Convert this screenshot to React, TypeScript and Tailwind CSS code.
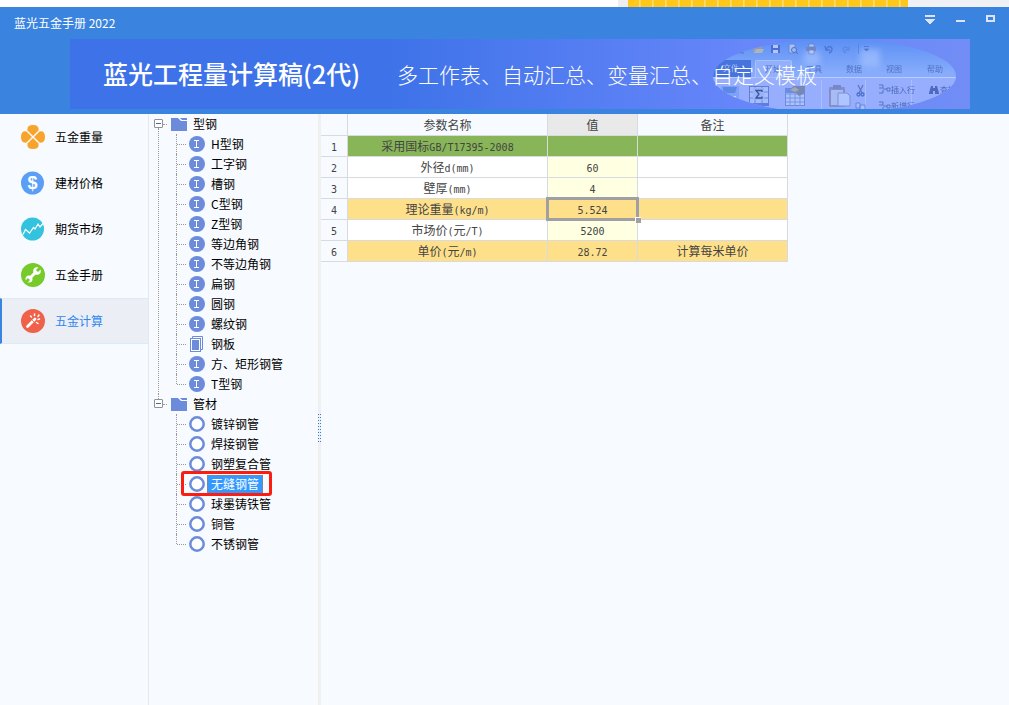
import { Fragment, useState } from "react";
import type { ReactNode } from "react";
import clsx from "clsx";

const NAV_ITEMS = [
  { label: "五金重量", icon: <CloverIcon /> },
  { label: "建材价格", icon: <DollarIcon /> },
  { label: "期货市场", icon: <TrendIcon /> },
  { label: "五金手册", icon: <WrenchIcon /> },
  { label: "五金计算", icon: <WandIcon /> },
];

type IconKind = "beam" | "plate" | "pipe";

interface TreeGroupData {
  label: string;
  items: { label: string; icon: IconKind }[];
}

const beam = (label: string) => ({ label, icon: "beam" as IconKind });
const pipe = (label: string) => ({ label, icon: "pipe" as IconKind });

const TREE: TreeGroupData[] = [
  {
    label: "型钢",
    items: [
      beam("H型钢"),
      beam("工字钢"),
      beam("槽钢"),
      beam("C型钢"),
      beam("Z型钢"),
      beam("等边角钢"),
      beam("不等边角钢"),
      beam("扁钢"),
      beam("圆钢"),
      beam("螺纹钢"),
      { label: "钢板", icon: "plate" },
      beam("方、矩形钢管"),
      beam("T型钢"),
    ],
  },
  {
    label: "管材",
    items: [
      pipe("镀锌钢管"),
      pipe("焊接钢管"),
      pipe("钢塑复合管"),
      pipe("无缝钢管"),
      pipe("球墨铸铁管"),
      pipe("铜管"),
      pipe("不锈钢管"),
    ],
  },
];

interface Row {
  name: string;
  value: string;
  note: string;
  kind: "title" | "input" | "result";
}

const ROWS: Row[] = [
  { name: "采用国标GB/T17395-2008", value: "", note: "", kind: "title" },
  { name: "外径d(mm)", value: "60", note: "", kind: "input" },
  { name: "壁厚(mm)", value: "4", note: "", kind: "input" },
  { name: "理论重量(kg/m)", value: "5.524", note: "", kind: "result" },
  { name: "市场价(元/T)", value: "5200", note: "", kind: "input" },
  { name: "单价(元/m)", value: "28.72", note: "计算每米单价", kind: "result" },
];

export default function App() {
  const [page, setPage] = useState("五金计算");
  const [node, setNode] = useState("无缝钢管");

  return (
    <div className="flex min-h-screen flex-col bg-[#f7fbff] font-['Noto_Sans_CJK_SC',sans-serif] text-xs text-black">
      <TopStrip />
      <header className="bg-[#3a84e0] pb-[5px]">
        <TitleBar />
        <Banner />
      </header>
      <div className="flex flex-1">
        <nav className="flex w-[149px] shrink-0 flex-col border-r border-[#e4e9f1]">
          {NAV_ITEMS.map((item) => (
            <button
              key={item.label}
              type="button"
              onClick={() => setPage(item.label)}
              className={clsx(
                "flex h-[46px] items-center gap-[10px] border-y border-l-2 pl-[19px]",
                item.label === page
                  ? "border-y-[#dce9f8] border-l-[#3a84e0] bg-[#ebeef5] text-[#2f86ee]"
                  : "border-transparent",
              )}
            >
              {item.icon}
              {item.label}
            </button>
          ))}
        </nav>
        <aside className="w-[169px] shrink-0 pl-[5px]">
          {TREE.map((group, i) => (
            <TreeGroup
              key={group.label}
              group={group}
              first={i === 0}
              last={i === TREE.length - 1}
              selected={node}
              onSelect={setNode}
            />
          ))}
        </aside>
        <div className="flex w-[3px] shrink-0 flex-col bg-[#f0f0f0] pt-[300px]">
          <div className="flex h-7 justify-between">
            <GripDots />
            <GripDots />
          </div>
        </div>
        <main className="min-w-0 flex-1">
          <ParamTable />
        </main>
      </div>
    </div>
  );
}

function GripDots() {
  return (
    <span className="w-px bg-[repeating-linear-gradient(180deg,#2f80d8_0px,#2f80d8_1px,transparent_1px,transparent_3px)]" />
  );
}

function TopStrip() {
  return (
    <div className="flex h-[7px] bg-white">
      <div className="flex-1" />
      <div className="w-[10px] bg-[#eeeef0]" />
      <div className="w-[280px] bg-[repeating-linear-gradient(90deg,#ffc61a_0px,#ffc81e_11px,#ffe07a_11px,#ffd34a_13px)]" />
      <div className="w-[101px] bg-[#f0f1f4]" />
    </div>
  );
}

function TitleBar() {
  return (
    <div className="flex h-8 items-center pr-1 pl-[14px] text-white">
      <h1 className="flex-1">蓝光五金手册 2022</h1>
      <div className="flex self-start">
        <WindowButton label="菜单">
          <path d="M1 1h10v2H1zM1 5h10v1L6 10L1 6z" />
        </WindowButton>
        <WindowButton label="最小化">
          <path d="M2 6h9v2H2z" />
        </WindowButton>
        <WindowButton label="最大化">
          <path fillRule="evenodd" d="M2 1h9v7H2zM4 3v3h5V3z" />
        </WindowButton>
      </div>
    </div>
  );
}

function WindowButton({ label, children }: { label: string; children: ReactNode }) {
  return (
    <button type="button" aria-label={label} className="flex h-[26px] w-[30px] items-center justify-center">
      <svg width="12" height="12" viewBox="0 0 12 12" fill="#dde3f8" shapeRendering="crispEdges">
        {children}
      </svg>
    </button>
  );
}

function Banner() {
  return (
    <div className="relative mr-[39px] ml-[70px] flex h-[70px] items-center overflow-hidden bg-linear-to-r from-[#3d72e8] from-35% to-[#6686fa] to-75% pl-[33px] whitespace-nowrap text-white">
      <div className="absolute inset-y-0 right-0">
        <RibbonArt />
      </div>
      <span className="relative text-[25px] font-medium">蓝光工程量计算稿(2代)</span>
      <span className="relative ml-[37px] text-[21px] font-light">多工作表、自动汇总、变量汇总、自定义模板</span>
    </div>
  );
}

// Faded office ribbon inside an ellipse, at the right end of the banner
function RibbonArt() {
  return (
    <svg width="290" height="70" viewBox="0 0 290 70" aria-hidden="true">
      <defs>
        <clipPath id="lens">
          <ellipse cx="154.500" cy="37" rx="121.500" ry="37" />
        </clipPath>
        <linearGradient id="sky" x1="0" y1="0" x2="0" y2="1">
          <stop offset="0" stopColor="#5b8ff5" />
          <stop offset="0.45" stopColor="#86acfb" />
          <stop offset="1" stopColor="#92acfc" />
        </linearGradient>
        <linearGradient id="edge" x1="0" y1="0" x2="1" y2="0">
          <stop offset="0" stopColor="#6686fa" stopOpacity="0" />
          <stop offset="1" stopColor="#728df5" />
        </linearGradient>
        <filter id="glow" x="-30%" y="-30%" width="160%" height="160%">
          <feGaussianBlur stdDeviation="3" />
        </filter>
      </defs>
      <rect width="290" height="70" fill="url(#edge)" />
      <g clipPath="url(#lens)">
        <rect width="290" height="74" fill="url(#sky)" />
        <path d="M124 12h16v14h-16zM180 10h20v18h-20z" fill="#b4cdff" opacity="0.5" filter="url(#glow)" />
        <rect x="33" y="38" width="244" height="36" fill="#96aefd" />
        <path d="M33 38.500H277" stroke="#b9ceff" />
        <rect x="33" y="21" width="38" height="17" fill="#4674dc" />
        <rect x="75.500" y="21.500" width="36" height="17" rx="1" fill="#93b0fd" stroke="#aabff6" />
        <path d="M141.500 41v30M185.500 41v30M231.500 41v30" stroke="#aabffe" />

        <g opacity="0.8">
          {/* quick access bar */}
          <path d="M55 14q2-1 9 0" stroke="#4565b8" fill="none" />
          <path d="M73 9h4l1-2h4v2l-2 5h-7z" fill="#9a9cb2" />
          <path d="M74 14l2-4h8l-2 4z" fill="#c0bca8" />
          <path d="M91 6h9v8h-9z" fill="#4b60cb" />
          <path d="M93 6h5v3h-5zM93 11h5v3h-5z" fill="#c3d2ff" />
          <path d="M109 5h6v9h-6z" fill="#b5cafb" stroke="#6385cb" />
          <circle cx="114" cy="11" r="2.500" fill="#9cc3ff" stroke="#5166a4" />
          <path d="M116 13l2 2" stroke="#5166a4" />
          <path d="M126 8h10v4h-10z" fill="#7580b8" />
          <path d="M129 5h5v3h-5zM129 11h5v4h-5z" fill="#bed0fb" stroke="#6079b8" strokeWidth="0.700" />
          <path d="M145 7l1 4h4M146 10q5-5 6 0q0 3-3 4" fill="none" stroke="#476fcc" strokeWidth="1.400" />
          <path d="M169 7v4h-4M169 10q-5-4-6 0q0 3 3 4" fill="none" stroke="#5e87dc" strokeWidth="1.400" />
          <path d="M178.500 5v10" stroke="#5782d8" />
          <path d="M184 7.500h5M184.500 10h4l-2 2z" stroke="#4769b7" strokeWidth="0.800" fill="#4769b7" />

          <g fontFamily="'Noto Sans CJK SC', sans-serif" fontSize="8" fill="#4765b8">
            <text x="43" y="32" fill="#c2d3fc">文件</text>
            <text x="85" y="33">开始</text>
            <text x="126" y="33">工具</text>
            <text x="166" y="33">数据</text>
            <text x="206" y="33">视图</text>
            <text x="247" y="33">帮助</text>
            <text x="211" y="54" fill="#3a56a8">插入行</text>
            <text x="211" y="70" fill="#3a56a8">新增行</text>
            <text x="260" y="54" fill="#3a56a8">查找</text>
          </g>

          {/* calculator */}
          <path d="M41 47h18v24H41z" fill="#78a0f4" />
          <path d="M43 48h14l-2 6H43z" fill="#4e80df" />
          <path d="M43 58h3M48 58h3M53 58h3M43 62h3M48 62h3M53 62h3" stroke="#d0ddff" strokeWidth="2" />
          {/* sum grid */}
          <rect x="69.500" y="47.500" width="19" height="18" fill="#a8c1ff" stroke="#5471cc" />
          <path d="M70 53h18M70 59h18M75 48v17M82 48v17" stroke="#627ed5" />
          <rect x="73" y="49" width="11" height="12" fill="#9ab5fa" />
          <path d="M82 53v-1.500h-6l3 3.500l-3 4h6v-1.500" fill="none" stroke="#263b79" strokeWidth="1.300" />
          <path d="M69 64h20v3H69z" fill="#4e73d5" />
          {/* property grid */}
          <rect x="105.500" y="49.500" width="19" height="17" fill="#b3c8ff" stroke="#6382d5" />
          <path d="M106 55h18M106 59h18M106 63h18M110 50v17M115 50v17M120 50v17" stroke="#718edc" />
          <path d="M105 50h20v4h-20z" fill="#6183df" />
          <path d="M109 51l5-4h11v7l-6 3l-3-3z" fill="#6f7fa6" />
          <path d="M110 51l5-3l4 3l-4 2z" fill="#a5a7a8" />
          {/* paste */}
          <rect x="149" y="48" width="16" height="20" rx="1" fill="#8087bb" />
          <rect x="151" y="51" width="12" height="15" fill="#aebff0" />
          <path d="M153 46h8v4h-8z" fill="#6f7ec0" />
          <path d="M158 54h9l3 3v10h-12z" fill="#b6cbff" stroke="#708ad0" />
          {/* scissors */}
          <path d="M178 46l4 8M183 46l-4 8" stroke="#5269b7" strokeWidth="1.300" />
          <circle cx="178.500" cy="55.500" r="1.500" fill="none" stroke="#3a5fc1" strokeWidth="1.300" />
          <circle cx="182.500" cy="55.500" r="1.500" fill="none" stroke="#3a5fc1" strokeWidth="1.300" />
          <path d="M176 64h4v5h-4zM180 66h5v5h-5z" fill="#adc4ff" stroke="#5b7ed4" />
          {/* insert row / new row */}
          <g fill="none" stroke="#4a64b5">
            <path d="M199 46h4v3h-4M199 54h4v-3M203 50h4M207 49h3v3h-3z" />
            <path d="M199 63h4v3h-4M199 71h4v-3M203 67h4M207 66h3v3h-3z" />
          </g>
          {/* binoculars */}
          <path d="M249 54l2-7h2v8h-4zM255 47h2l2 7v1h-4zM253 49h2v3h-2z" fill="#3d59b0" />
        </g>
      </g>
    </svg>
  );
}

interface TreeGroupProps {
  group: TreeGroupData;
  first: boolean;
  last: boolean;
  selected: string;
  onSelect: (label: string) => void;
}

function TreeGroup({ group, first, last, selected, onSelect }: TreeGroupProps) {
  const [open, setOpen] = useState(true);
  const guide = "border-l border-dotted border-[#999]";

  return (
    <div className="flex">
      <div className="flex w-[9px] flex-col items-center">
        <span className={clsx("h-[5px]", !first && guide)} />
        <button
          type="button"
          aria-label={open ? "折叠" : "展开"}
          onClick={() => setOpen(!open)}
          className="flex size-[9px] items-center justify-center rounded-[1px] border border-[#919191] bg-white"
        >
          <span className="h-px w-[5px] bg-[#4b63a7]" />
        </button>
        <span className={clsx("flex-1", !last && guide)} />
      </div>
      <div>
        <div className="flex h-5 items-center">
          <span className="mr-1 w-1 border-t border-dotted border-[#999]" />
          <svg width="16" height="13" viewBox="0 0 16 13" fill="#6c8cdb" aria-hidden="true">
            <path d="M0 0h7l3 3h6v10H0z" />
            <path d="M9 0h7v2h-5z" />
          </svg>
          <span className="ml-[6px]">{group.label}</span>
        </div>
        {open && (
          <ul className="pl-[13px]">
            {group.items.map((item, i) => (
              <li key={item.label} className="relative flex h-5 items-center">
                <span
                  className={clsx(
                    guide,
                    "self-start",
                    i === group.items.length - 1 ? "h-[10px]" : "h-5",
                  )}
                />
                <span className="mr-[3px] w-[9px] border-t border-dotted border-[#999]" />
                <TreeIcon kind={item.icon} />
                <button
                  type="button"
                  onClick={() => onSelect(item.label)}
                  className={clsx(
                    "ml-[2px] h-[19px] border border-dotted px-[3px] leading-4 whitespace-nowrap",
                    item.label === selected
                      ? "border-[#c2763a] bg-[#3399ff] text-white"
                      : "border-transparent",
                  )}
                >
                  {item.label}
                </button>
                {item.label === selected && (
                  <span className="pointer-events-none absolute -top-[3px] left-[5px] h-[25px] w-[91px] rounded-[3px] border-3 border-[#fb1d10]" />
                )}
              </li>
            ))}
          </ul>
        )}
      </div>
    </div>
  );
}

function TreeIcon({ kind }: { kind: IconKind }) {
  return (
    <svg width="16" height="16" viewBox="0 0 16 16" className="shrink-0" aria-hidden="true">
      {kind === "beam" && (
        <>
          <circle cx="8" cy="8" r="8" fill="#6c8cdb" />
          <path d="M5 4.500h5M5 11.500h5M7.500 4.500v7" stroke="#fff" />
        </>
      )}
      {kind === "pipe" && (
        <circle cx="8" cy="8" r="6.700" fill="#fff" stroke="#6c8cdb" strokeWidth="2.500" />
      )}
      {kind === "plate" && (
        <>
          <path d="M3.500 2.500v-2h10v13h-2" fill="none" stroke="#6c8cdb" />
          <rect x="1.500" y="2.500" width="10" height="13" fill="#fff" stroke="#6c8cdb" />
          <rect x="3" y="4" width="7" height="10" fill="#6c8cdb" />
        </>
      )}
    </svg>
  );
}

const cell = "h-[21px] border-r border-b border-[#d7dade] p-0 text-center font-normal leading-4";

function ParamTable() {
  return (
    <table className="table-fixed border-separate border-spacing-0 text-[#444]">
      <colgroup>
        <col className="w-[27px]" />
        <col className="w-[200px]" />
        <col className="w-[90px]" />
        <col className="w-[150px]" />
      </colgroup>
      <thead>
        <tr className="h-[22px]">
          <th className={cell} />
          <th className={cell}>参数名称</th>
          <th className={clsx(cell, "bg-[#e9e9e9]")}>值</th>
          <th className={cell}>备注</th>
        </tr>
      </thead>
      <tbody>
        {ROWS.map((row, i) => {
          const fill = {
            title: "bg-[#87b558]",
            input: "bg-white",
            result: "bg-[#ffe08a]",
          }[row.kind];
          return (
            <tr key={row.name} className={fill}>
              <th className={clsx(cell, "bg-[#f7fbff]")}>
                <CellText text={String(i + 1)} />
              </th>
              <td className={cell}>
                <CellText text={row.name} />
              </td>
              <td className={clsx(cell, "relative", row.kind === "input" && "bg-[#ffffe1]")}>
                <CellText text={row.value} />
                {i === 3 && <CellCursor />}
              </td>
              <td className={cell}>
                <CellText text={row.note} />
              </td>
            </tr>
          );
        })}
      </tbody>
    </table>
  );
}

// Latin runs use a half-width mono face so they line up with the 12px hanzi
function CellText({ text }: { text: string }) {
  return (
    <>
      {text.split(/([ -~]+)/).map((part, i) =>
        i % 2 === 1 ? (
          <span key={i} className="font-['DejaVu_Sans_Mono',monospace] text-[10px] leading-none">
            {part}
          </span>
        ) : (
          <Fragment key={i}>{part}</Fragment>
        ),
      )}
    </>
  );
}

function CellCursor() {
  return (
    <span className="pointer-events-none absolute -inset-[2px] z-10 border-3 border-[#a0a0a4]">
      <span className="absolute -right-[5px] -bottom-[5px] size-[6px] border-t border-l border-white bg-[#a0a0a4]" />
    </span>
  );
}

function CloverIcon() {
  return (
    <svg width="24" height="24" viewBox="0 0 24 24" fill="#f7a42d" aria-hidden="true">
      <path d="M12 11L6.500 5.500Q5.500 0 12 0T17.500 5.500z" />
      <path d="M12 13L6.500 18.500Q5.500 24 12 24T17.500 18.500z" />
      <path d="M11 12L5.500 6.500Q0 5.500 0 12T5.500 17.500z" />
      <path d="M13 12L18.500 6.500Q24 5.500 24 12T18.500 17.500z" />
    </svg>
  );
}

function DollarIcon() {
  return (
    <svg width="24" height="24" viewBox="0 0 24 24" aria-hidden="true">
      <circle cx="11.500" cy="12" r="11.500" fill="#5a9ff5" />
      <text x="11.500" y="18" textAnchor="middle" fontFamily="'Liberation Sans', sans-serif" fontSize="18" fontWeight="700" fill="#fff">
        $
      </text>
    </svg>
  );
}

function TrendIcon() {
  return (
    <svg width="24" height="24" viewBox="0 0 24 24" aria-hidden="true">
      <circle cx="11.500" cy="12" r="11.500" fill="#34c3de" />
      <path d="M2 17.500L4.500 12.500L8.500 16L12.500 10.500L14 12L17 7L19 10L22 6.500" fill="none" stroke="#fff" strokeWidth="1.200" />
    </svg>
  );
}

function WrenchIcon() {
  return (
    <svg width="24" height="24" viewBox="0 0 24 24" aria-hidden="true">
      <circle cx="12" cy="12" r="12" fill="#76ca29" />
      <path d="M8 16L16 8" stroke="#fff" strokeWidth="3" />
      <circle cx="16" cy="8" r="3.800" fill="#fff" />
      <circle cx="8" cy="16" r="3.500" fill="#fff" />
      <path d="M16 8L20 4M8 16L4 20" stroke="#76ca29" strokeWidth="3" />
    </svg>
  );
}

function WandIcon() {
  return (
    <svg width="24" height="24" viewBox="0 0 24 24" aria-hidden="true">
      <circle cx="12" cy="12" r="12" fill="#ef6149" />
      <path d="M6.500 17.500L14 10" stroke="#fff" strokeWidth="2.800" strokeLinecap="round" />
      <path d="M11 11l2 2" stroke="#ef6149" strokeWidth="0.800" />
      <path d="M13.500 5v1.500M9.500 7l1 1M17 7.500l1-1.500M17 10.500l1.500-0.500M15.500 13.500l1.500 1" stroke="#fff" strokeWidth="1.500" strokeLinecap="round" />
    </svg>
  );
}
